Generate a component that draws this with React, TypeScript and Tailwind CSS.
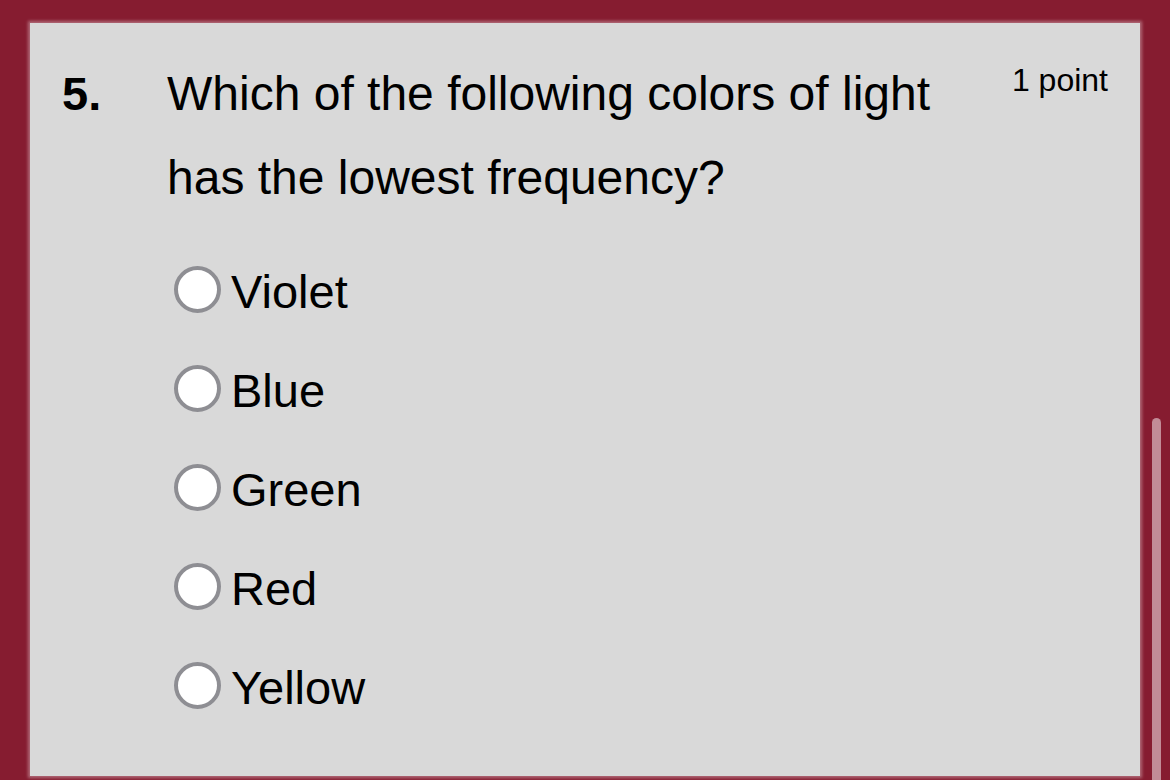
import React from "react";

const options = ["Violet", "Blue", "Green", "Red", "Yellow"];

export default function App() {
  return (
    <div
      className="relative w-[1170px] h-[780px] overflow-hidden bg-[#861c30] pt-[23px] pl-[30px]"
      style={{ fontFamily: '"Liberation Sans", Arial, sans-serif' }}
    >
      <div className="w-[1110px] h-[753px] bg-[#d9d9d9] shadow-[0_0_3px_2px_rgba(255,255,255,0.35)] pt-[29px] pl-[32px] pr-[32px] text-black">
        <div className="flex items-start">
          <div className="w-[105px] shrink-0 text-[47px] leading-[84px] font-bold">5.</div>
          <div className="flex-1 text-[48px] leading-[84px]">
            Which of the following colors of light
            <br />
            has the lowest frequency?
          </div>
          <div className="mt-[10px] text-[32px] leading-[36px] whitespace-nowrap">1 point</div>
        </div>
        <div className="mt-[20px] ml-[112px] flex flex-col">
          {options.map((o) => (
            <div key={o} className="h-[99px] flex items-center gap-[10px]">
              <div className="w-[47px] h-[47px] rounded-full border-[4px] border-[#8e8e93] bg-white shrink-0" />
              <div className="text-[47px] pt-[5px] leading-[52px]">{o}</div>
            </div>
          ))}
        </div>
      </div>
      <div className="absolute left-[1152px] top-[418px] w-[9px] h-[380px] rounded-full bg-[#c28c97]" />
    </div>
  );
}
